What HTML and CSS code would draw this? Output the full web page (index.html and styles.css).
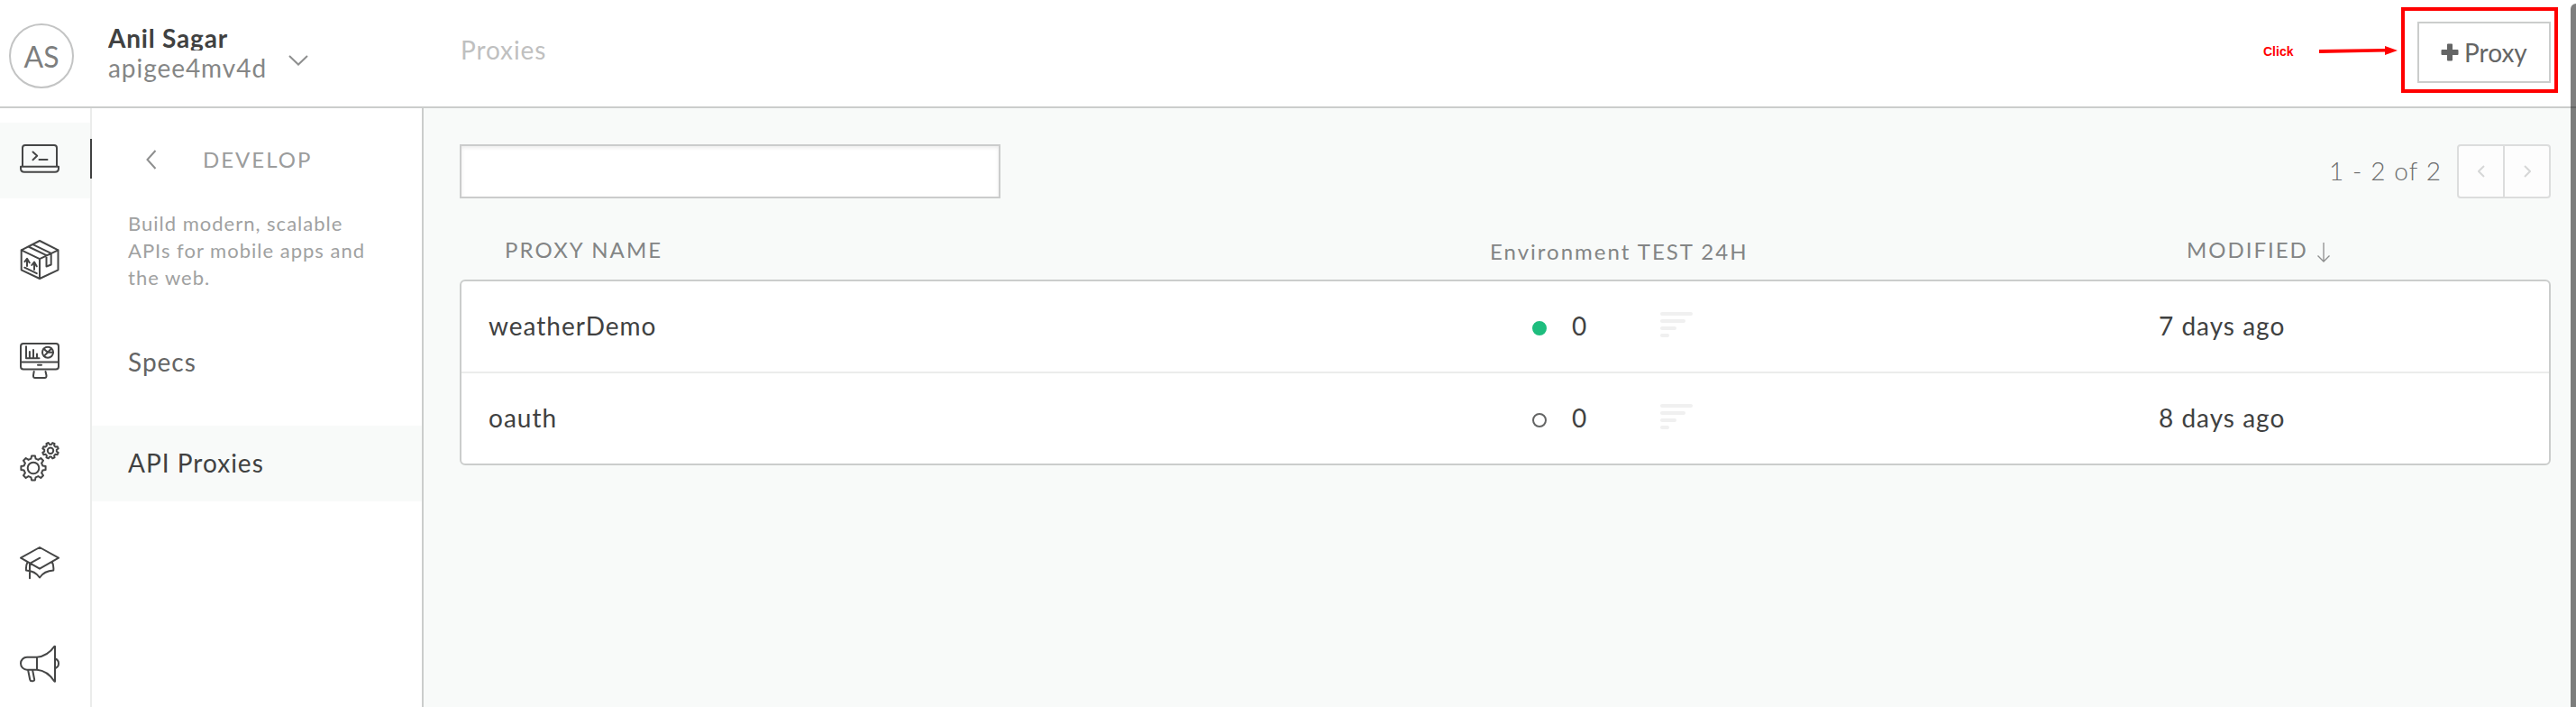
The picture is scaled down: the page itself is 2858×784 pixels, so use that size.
FILE: index.html
```html
<!DOCTYPE html>
<html lang="en">
<head>
<meta charset="utf-8">
<title>Proxies</title>
<link rel="stylesheet" href="styles.css">
</head>
<body>
<div class="app">
  <header class="topbar">
    <div class="avatar">AS</div>
    <div class="account">
      <div class="account-name">Anil Sagar</div>
      <div class="account-org">apigee4mv4d</div>
    </div>
    <svg class="account-caret" width="22" height="12" viewBox="0 0 22 12"><path d="M1 1l10 9.5L21 1"/></svg>
    <h1 class="page-title">Proxies</h1>
    <button class="new-proxy">
      <svg width="20" height="20" viewBox="0 0 20 20"><path d="M8 .5h4q1 0 1 1V7h5.500q1 0 1 1v4q0 1-1 1H13v5.500q0 1-1 1H8q-1 0-1-1V13H1.500q-1 0-1-1V8q0-1 1-1H7V1.500q0-1 1-1z"/></svg>
      <span>Proxy</span>
    </button>
  </header>

  <div class="body">
    <nav class="rail">
      <a class="rail-item active"><svg class="icon" viewBox="0 0 44 44"><path d="M3 30V10q0-3 3-3h32q3 0 3 3v20M1 30.700h42v2q0 4-4 4H5q-4 0-4-4zM14.500 14.500l4.700 4.300-4.700 4.400M21.500 23h9"/></svg></a>
      <a class="rail-item"><svg class="icon" viewBox="0 0 44 44"><path d="M22 1l20.500 10.300v22L22 43 1.700 33.300v-22zM1.700 11.300L22 21.200l20.500-9.900M22 21.200V43M9.500 7.500l20 9.700v12.300l5.200-2V14.800L14.500 5.200M5.500 24.200L8 20.800l2.700 4.500M8 21v8M13.300 28l2.700-3.500 2.700 4.800M16 25v8M5.300 30.700l13.400 6.500"/></svg></a>
      <a class="rail-item"><svg class="icon" viewBox="0 0 44 44"><rect x="1" y="3" width="42" height="28.500" rx="3"/><path d="M1 23.400h42M20 26.700h4M15.700 34L15 38.200q-.3 2.800 2 2.800h10.500q2.300 0 2-2.800L28.500 34M7 6.300v13h14.500M10.900 12v7M15 10v9M19 14.500V19"/><circle cx="31" cy="12.700" r="6"/><path d="M37 12.700h-6l-4.500-4M31 12.700l-4.200 4.200M31 12.700l4-4.200"/></svg></a>
      <a class="rail-item"><svg class="icon" viewBox="0 0 44 44">
        <defs><path id="gear" vector-effect="non-scaling-stroke" d="M10.300-2.600L13.600-1.900V1.900L10.300 2.600 9.100 5.400 11 8.300 8.300 11 5.400 9.100 2.600 10.300 1.900 13.600H-1.900L-2.600 10.300-5.400 9.100-8.300 11-11 8.300-9.100 5.400-10.300 2.600-13.600 1.900V-1.900L-10.300-2.600-9.100-5.400-11-8.300-8.300-11-5.400-9.100-2.600-10.300-1.900-13.600H1.900L2.600-10.300 5.400-9.100 8.300-11 11-8.300 9.100-5.400Z"/></defs>
        <use href="#gear" transform="translate(15 29)"/><circle cx="15" cy="29" r="6.300"/>
        <use href="#gear" transform="translate(34 9.700) rotate(22.500) scale(.65)"/><circle cx="34" cy="9.700" r="3.200"/></svg></a>
      <a class="rail-item"><svg class="icon" viewBox="0 0 44 44"><path d="M22 5l21 11.700-21 12L1 16.700zM22.300 16.700L11 22.800v16.500M8.500 21.500Q6.500 25 7 30.500q10 .5 15 8 5-7.500 15.300-8 .5-5-1.300-9"/></svg></a>
      <a class="rail-item"><svg class="icon" viewBox="0 0 44 44"><path d="M19 14.700H8a7 7 0 0 0 0 14h11zM19 14.700Q30.500 14 38.500 2.700h.5v39h-.5Q30.500 29.500 19 28.700M39.500 16.500q3.500 1.500 3.500 5.200t-3.500 5.300M9.200 29.500l2 10q.3 1.700 2 1.700h1.300q2 0 1.600-1.900L14.200 29.500"/></svg></a>
    </nav>

    <aside class="panel">
      <div class="panel-head">
        <svg width="12" height="22" viewBox="0 0 12 22"><path d="M10.500 1L1.500 11l9 10"/></svg>
        <span>DEVELOP</span>
      </div>
      <p class="panel-text">Build modern, scalable<br>APIs for mobile apps and<br>the web.</p>
      <a class="panel-link">Specs</a>
      <a class="panel-link selected">API Proxies</a>
    </aside>

    <main class="content">
      <div class="toolbar">
        <input class="search" type="text" aria-label="Search">
        <div class="pagination">
          <span class="range">1 - 2 of 2</span>
          <div class="pager">
            <button class="pager-button"><svg width="8" height="14" viewBox="0 0 8 14"><path d="M7 1L1 7l6 6"/></svg></button>
            <button class="pager-button"><svg width="8" height="14" viewBox="0 0 8 14"><path d="M1 1l6 6-6 6"/></svg></button>
          </div>
        </div>
      </div>
      <div class="table-head">
        <span class="head-name">PROXY NAME</span>
        <span class="head-env">Environment TEST 24H</span>
        <span class="head-modified">MODIFIED<svg width="16" height="22" viewBox="0 0 16 22"><path d="M8 0v21M1.500 14.500L8 21l6.500-6.500"/></svg></span>
      </div>
      <div class="table">
        <div class="row">
          <span class="name">weatherDemo</span>
          <span class="status on"></span><span class="count">0</span>
          <span class="spark"><i></i><i></i><i></i><i></i></span>
          <span class="date">7 days ago</span>
        </div>
        <div class="row">
          <span class="name">oauth</span>
          <span class="status"></span><span class="count">0</span>
          <span class="spark"><i></i><i></i><i></i><i></i></span>
          <span class="date">8 days ago</span>
        </div>
      </div>
    </main>
  </div>

  <div class="callout-text">Click</div>
  <svg class="callout-arrow" width="88" height="12" viewBox="0 0 88 12"><path d="M0 5L73 4V1l14 5-14 5V7.500L0 9z"/></svg>
  <div class="callout-box"></div>
  <div class="scroll-thumb"></div>
</div>
</body>
</html>
```
FILE: styles.css
```css
* { box-sizing: border-box; }
body { margin: 0; font-family: Lato, sans-serif; font-size: 28px; color: #404141; background: #fff; }
svg { fill: none; display: block; flex: none; }
button { padding: 0; font: inherit; }

.app { position: relative; width: 2858px; height: 784px; overflow: hidden; display: flex; flex-direction: column; }

.topbar { height: 120px; flex: none; border-bottom: 2px solid #cbcdcc; background: #fff; display: flex; align-items: flex-start; padding: 0 28px 0 10px; }
.avatar { width: 72px; height: 72px; margin-top: 26px; border: 2px solid #c3c4c4; border-radius: 50%; color: #7d7e7e; font-size: 32px; line-height: 69px; text-align: center; }
.account { width: 200px; margin: 28px 0 0 38px; }
.account-name { height: 28px; line-height: 28px; overflow: hidden; font-weight: 700; white-space: nowrap; letter-spacing: .8px; }
.account-org { line-height: 39px; color: #858686; letter-spacing: .95px; }
.account-caret { margin-top: 61px; stroke: #8e8f8f; stroke-width: 2; }
.page-title { margin: 36px auto 0 169px; font-size: 28px; line-height: 38px; font-weight: 400; color: #bfc0c0; letter-spacing: .9px; }
.new-proxy { width: 148px; height: 68px; margin-top: 24px; padding: 0 0 0 24px; border: 2px solid #cbcdcc; background: #fff; color: #646565; display: flex; align-items: center; gap: 6px; }
.new-proxy svg { fill: #646565; }

.body { flex: 1; display: flex; min-height: 0; }

.rail { width: 102px; border-right: 2px solid #ebeceb; padding-top: 16px; display: flex; flex-direction: column; gap: 28px; flex: none; }
.rail-item { height: 84px; flex: none; padding: 18px 0 0 22px; position: relative; }
.rail-item.active { background: #f8faf9; }
.rail-item.active::after { content: ""; position: absolute; left: 100px; top: 18px; width: 2px; height: 44px; background: #404141; }
.icon { width: 44px; height: 44px; stroke: #454646; stroke-width: 2; stroke-linejoin: round; stroke-linecap: round; }

.panel { width: 368px; flex: none; border-right: 2px solid #cbcdcc; }
.panel-head { display: flex; align-items: center; gap: 51px; height: 30px; margin: 41px 0 0 60px; font-size: 24px; letter-spacing: 2px; color: #9b9c9c; }
.panel-head svg { stroke: #8e8f8f; stroke-width: 2; margin-top: 2px; }
.panel-text { margin: 42px 0 0 40px; height: 127px; font-size: 22px; line-height: 30px; letter-spacing: 1px; color: #a0a1a1; white-space: nowrap; }
.panel-link { display: block; height: 84px; line-height: 82px; padding-left: 40px; margin-bottom: 28px; letter-spacing: 1px; color: #646565; }
.panel-link.selected { background: #f8faf9; color: #404141; }

.content { flex: 1; background: #f8faf9; padding: 40px 28px 0 40px; }
.toolbar { display: flex; justify-content: space-between; }
.search { width: 600px; height: 60px; border: 2px solid #cbcccc; background: #fff; box-shadow: inset 0 2px 4px rgba(0,0,0,.08); outline: none; border-radius: 0; }
.pagination { display: flex; align-items: center; gap: 17px; }
.range { font-weight: 300; letter-spacing: 1.1px; color: #6c6d6d; line-height: 56px; padding-bottom: 2px; }
.pager { width: 104px; height: 60px; display: flex; border: 2px solid #dcdddd; border-radius: 4px; background: #fdfdfd; }
.pager-button { flex: 1; border: 0; background: none; display: flex; align-items: center; justify-content: center; }
.pager-button + .pager-button { border-left: 2px solid #dcdddd; }
.pager-button svg { stroke: #d6d7d7; stroke-width: 2; }

.table-head { height: 90px; display: grid; grid-template-columns: 1143px 773px 1fr; font-size: 24px; color: #838585; letter-spacing: 2px; line-height: 30px; padding-top: 42px; }
.head-name { padding-left: 50px; letter-spacing: 2.1px; }
.head-env { padding-top: 2px; }
.head-modified { display: flex; gap: 9px; }
.head-modified svg { stroke: #8e8f8f; stroke-width: 1.3; margin-top: 7px; }
.table { border: 2px solid #cbcdcc; border-radius: 6px; background: #fff; overflow: hidden; }
.row { height: 100px; display: grid; grid-template-columns: 1188px 44px 98px 553px 1fr; line-height: 98px; letter-spacing: 1px; }
.row + .row { height: 102px; border-top: 2px solid #ebeceb; }
.name { padding-left: 30px; }
.status { width: 16px; height: 16px; margin-top: 44px; border: 2px solid #646565; border-radius: 50%; }
.status.on { background: #1ebd7e; border-color: #1ebd7e; }
.spark { display: flex; flex-direction: column; gap: 4px; padding-top: 34px; }
.spark i { height: 4px; width: 36px; border-radius: 2px; background: #f0f0f0; }
.spark i:nth-child(2) { width: 28px; }
.spark i:nth-child(3) { width: 18px; }
.spark i:nth-child(4) { width: 10px; }

.callout-text { position: absolute; left: 2511px; top: 49px; font: 700 14px/16px "Liberation Sans", Arial, sans-serif; color: #f00; }
.callout-arrow { position: absolute; left: 2573px; top: 50px; fill: #f00; }
.callout-box { position: absolute; left: 2664px; top: 8px; width: 174px; height: 95px; border: 4px solid #f00; }
.scroll-thumb { position: absolute; left: 2852px; top: 4px; width: 12px; height: 790px; border-radius: 6px; background: rgba(0,0,0,.5); }
```
